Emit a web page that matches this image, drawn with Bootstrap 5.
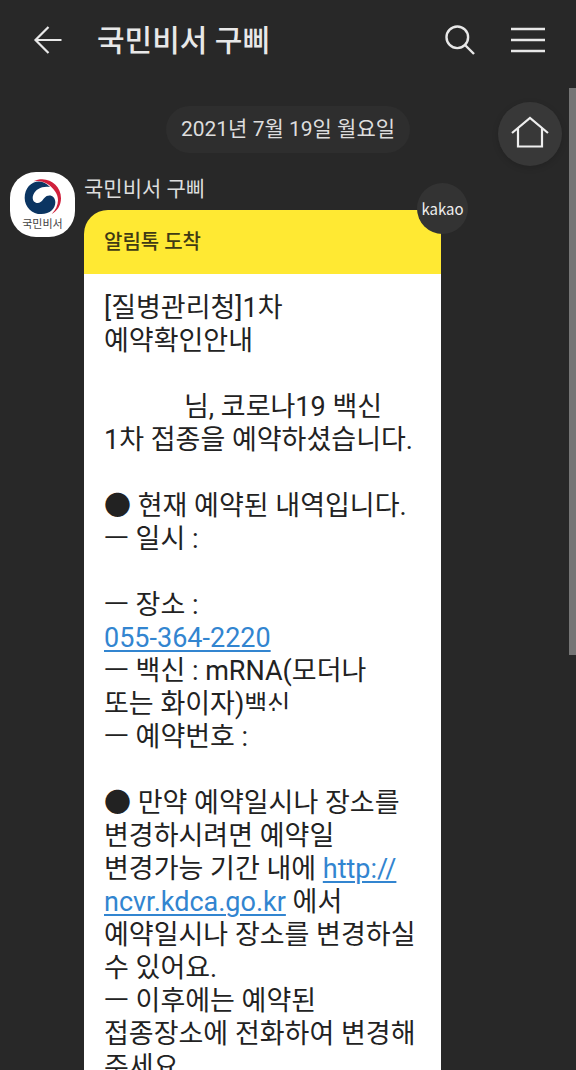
<!DOCTYPE html>
<html lang="ko">
<head>
<meta charset="utf-8">
<meta name="viewport" content="width=device-width, initial-scale=1">
<title>국민비서 구삐</title>
<link href="https://cdn.jsdelivr.net/npm/bootstrap@5.3.0/dist/css/bootstrap.min.css" rel="stylesheet">
<style>
  body { background: #282828; color: #ddd; font-family: Roboto, "Noto Sans CJK KR", sans-serif; }
  .topbar { height: 88px; padding: 0 30px 8px; color: #e8e8e8; }
  .topbar h1 { font-size: 30px; font-weight: 500; line-height: 42px; margin-left: 31px; padding-top: 2px; }
  .icon-btn { background: none; border: 0; padding: 0; color: inherit; display: flex; }
  .icon-gap { margin-right: 32px; }
  .thread-area { min-height: 0; padding-top: 18px; }
  .date-pill { background: #2e2e2e; font-size: 21px; line-height: 47px; padding: 0 15px; }
  .home-btn { top: 14px; right: 14px; width: 64px; height: 64px; background: #383838; border: 0; color: #eee; box-shadow: 0 2px 6px rgba(0,0,0,.15); }
  .scroll-thumb { top: 0; right: 0; width: 7px; height: 577px; max-height: 57.7%; background: #757575; }
  .message-row { padding-left: 10px; margin-top: 19px; gap: 9px; }
  .avatar { width: 65px; height: 65px; border-radius: 26px; background: #fff; color: #444; padding-top: 5px; }
  .avatar small { font-size: 11px; line-height: 16px; }
  .sender { font-size: 21px; line-height: 34px; margin-bottom: 4px; }
  .bubble { width: 73%; max-width: 357px; color: #222; }
  .bubble-head { background: #ffe933; color: #3f3a14; font-size: 20px; font-weight: 500; line-height: 64px; padding-left: 20px; border-top-left-radius: 24px; }
  .bubble-text { background: #fff; font-size: 27px; line-height: 33px; padding: 18px 0 16px 20px; white-space: nowrap; }
  .bubble-text a { color: #3285d0; text-decoration-thickness: 2px; text-underline-offset: 3px; }
  .kakao-badge { top: -27px; right: -27px; width: 51px; height: 51px; background: #333; color: #eee; font: 15px/51px "Noto Sans CJK KR", sans-serif; }
  .blank-name { display: inline-block; width: 80px; }
  .cut { position: relative; font-size: 25px; }
  .cut::after { content: ""; position: absolute; left: 0; right: 0; bottom: 0; height: 8px; background: #fff; }
</style>
</head>
<body class="vh-100 overflow-hidden d-flex flex-column">
<header class="topbar d-flex align-items-center flex-shrink-0">
  <button class="icon-btn" aria-label="뒤로">
    <svg width="36" height="32" viewBox="0 0 36 32" fill="none" stroke="currentColor" stroke-width="2.2"><path d="M18.500 3 5.500 16l13 13M5.500 16H31.500"/></svg>
  </button>
  <h1 class="mb-0 flex-grow-1">국민비서 구삐</h1>
  <button class="icon-btn icon-gap" aria-label="검색">
    <svg width="40" height="36" viewBox="0 0 40 36" fill="none" stroke="currentColor" stroke-width="2.4"><circle cx="19.300" cy="15.300" r="10.800"/><path d="m27 23 9 9"/></svg>
  </button>
  <button class="icon-btn" aria-label="메뉴">
    <svg width="36" height="32" viewBox="0 0 36 32" fill="none" stroke="currentColor" stroke-width="2.400"><path d="M1 5h34M1 16h34M1 27h34"/></svg>
  </button>
</header>
<main class="thread-area position-relative flex-grow-1 overflow-hidden">
  <div class="text-center"><span class="date-pill d-inline-block rounded-pill">2021년 7월 19일 월요일</span></div>
  <section class="message-row d-flex align-items-start">
    <div class="avatar d-flex flex-column align-items-center flex-shrink-0">
      <svg width="40" height="40" viewBox="43 24 120 111" preserveAspectRatio="none">
        <path fill="#0b3562" d="M124 52C92 20 48 42 48 82C48 107 70 127 98 127C124 126 140 112 140 94C140 79 126 71 114 77C103 83 101 96 87 96C74 96 69 84 74 73C81 58 101 48 124 52Z"/>
        <path fill="#d0203c" d="M74 36C115 18 157 45 157 83C157 103 146 118 129 127C149 108 154 84 140 65C126 44 101 31 74 36Z"/>
      </svg>
      <small>국민비서</small>
    </div>
    <div class="flex-grow-1">
      <div class="sender">국민비서 구삐</div>
      <article class="bubble position-relative">
        <div class="bubble-head">알림톡 도착</div>
        <div class="kakao-badge position-absolute rounded-circle text-center">kakao</div>
        <div class="bubble-text">[질병관리청]1차<br>예약확인안내<br><br><span class="blank-name"></span>님, 코로나19 백신<br>1차 접종을 예약하셨습니다.<br><br>● 현재 예약된 내역입니다.<br>ㅡ 일시 :<br><br>ㅡ 장소 :<br><a href="tel:055-364-2220">055-364-2220</a><br>ㅡ 백신 : mRNA(모더나<br>또는 화이자)<span class="cut">백신</span><br>ㅡ 예약번호 :<br><br>● 만약 예약일시나 장소를<br>변경하시려면 예약일<br>변경가능 기간 내에 <a href="http://ncvr.kdca.go.kr">http://<br>ncvr.kdca.go.kr</a> 에서<br>예약일시나 장소를 변경하실<br>수 있어요.<br>ㅡ 이후에는 예약된<br>접종장소에 전화하여 변경해<br>주세요.</div>
      </article>
    </div>
  </section>
  <button class="home-btn position-absolute rounded-circle d-flex align-items-center justify-content-center p-0" aria-label="홈">
    <svg width="40" height="36" viewBox="0 0 40 36" fill="none" stroke="currentColor" stroke-width="2.2"><path d="M2 17 20 2l18 15M8 12.500V30.500H32V12.500"/></svg>
  </button>
  <div class="scroll-thumb position-absolute"></div>
</main>
<script src="https://cdn.jsdelivr.net/npm/bootstrap@5.3.0/dist/js/bootstrap.bundle.min.js"></script>
</body>
</html>
